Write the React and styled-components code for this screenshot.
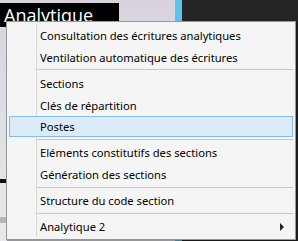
import React from "react";
import styled, { createGlobalStyle } from "styled-components";

const Global = createGlobalStyle`
  html, body { margin: 0; padding: 0; }
  body { width: 298px; height: 241px; overflow: hidden; font-family: "Noto Sans", "Open Sans", sans-serif; }
  #root { width: 298px; height: 241px; }
`;

const Stage = styled.div`
  position: relative;
  width: 298px;
  height: 241px;
  display: flex;
  overflow: hidden;
`;

const PhotoPane = styled.div`
  width: 175px;
  display: flex;
  flex-direction: column;
  background: linear-gradient(180deg, #d9d2dc 0%, #dcdde2 40%, #e8e9ec 100%);
`;

const TitleBox = styled.div`
  margin-top: 3px;
  width: 119px;
  height: 24px;
  background: #000;
  color: #fff;
  font-family: "Open Sans", "Noto Sans", sans-serif;
  font-size: 18px;
  line-height: 24px;
  padding-left: 4px;
  box-sizing: border-box;
  overflow: hidden;
  white-space: nowrap;
`;

const Smudge = styled.div`
  margin-top: ${(p) => p.$top}px;
  width: 10px;
  height: ${(p) => p.$h}px;
  background: ${(p) => p.$c};
`;

const Stripe = styled.div`
  width: 7px;
  background: #5ac4ee;
`;

const DarkPane = styled.div`
  flex: 1;
  background: #252525;
`;

const Menu = styled.div`
  position: absolute;
  left: 6px;
  top: 21px;
  width: 290px;
  height: 219px;
  box-sizing: border-box;
  background: #f5f5f5;
  border: 1px solid #979797;
  box-shadow: 1px 1px 1px rgba(0, 0, 0, 0.35);
  padding: 2px 2px;
  display: flex;
  flex-direction: column;
  font-family: "Noto Sans", "Open Sans", sans-serif;
  font-size: 11.2px;
  color: #000;
  &::before {
    content: "";
    position: absolute;
    left: 29px;
    top: 2px;
    bottom: 2px;
    width: 1px;
    background: #d7d7d7;
  }
`;

const Item = styled.div`
  position: relative;
  height: 22px;
  box-sizing: border-box;
  display: flex;
  align-items: center;
  padding-left: 30px;
  padding-right: 8px;
  padding-top: 1px;
  border: 1px solid ${(p) => (p.$active ? "#84bde9" : "transparent")};
  background: ${(p) => (p.$active ? "#dcebfa" : "transparent")};
  z-index: 1;
`;

const Label = styled.span`
  flex: 1;
  white-space: nowrap;
`;

const Arrow = styled.span`
  width: 0;
  height: 0;
  border-top: 4px solid transparent;
  border-bottom: 4px solid transparent;
  border-left: 4px solid #222;
`;

const Separator = styled.div`
  height: 4px;
  display: flex;
  align-items: center;
  padding-left: 28px;
  &::after {
    content: "";
    flex: 1;
    height: 1px;
    background: #c8c8c8;
  }
`;

const entries = [
  { t: "Consultation des écritures analytiques" },
  { t: "Ventilation automatique des écritures" },
  { sep: true },
  { t: "Sections" },
  { t: "Clés de répartition" },
  { t: "Postes", active: true },
  { sep: true },
  { t: "Eléments constitutifs des sections" },
  { t: "Génération des sections" },
  { sep: true },
  { t: "Structure du code section" },
  { sep: true },
  { t: "Analytique 2", sub: true },
];

export default function App() {
  return (
    <>
      <Global />
      <Stage>
        <PhotoPane>
          <TitleBox>Analytique</TitleBox>
          <Smudge $top={152} $h={4} $c="#111" />
          <Smudge $top={34} $h={6} $c="#b5b5b5" />
        </PhotoPane>
        <Stripe />
        <DarkPane />
        <Menu>
          {entries.map((e, i) =>
            e.sep ? (
              <Separator key={i} />
            ) : (
              <Item key={i} $active={e.active}>
                <Label>{e.t}</Label>
                {e.sub && <Arrow />}
              </Item>
            )
          )}
        </Menu>
      </Stage>
    </>
  );
}
